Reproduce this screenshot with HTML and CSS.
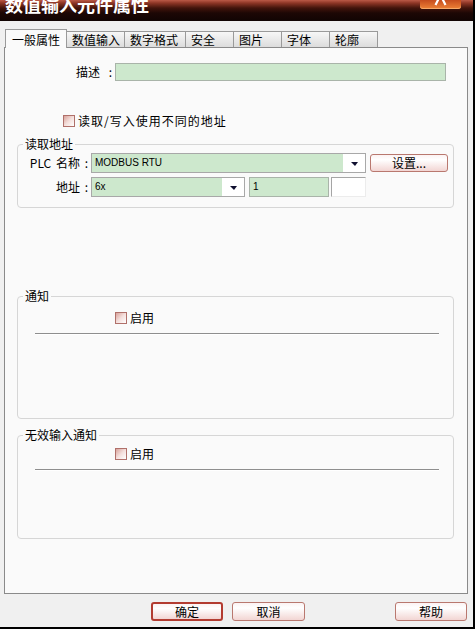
FILE: index.html
```html
<!DOCTYPE html>
<html lang="zh-CN">
<head>
<meta charset="utf-8">
<title>数值输入元件属性</title>
<link rel="stylesheet" href="styles.css">
</head>
<body>
<div class="window">
  <div class="titlebar">
    <span class="title">数值输入元件属性</span>
    <span class="close">
      <svg width="41" height="9" viewBox="0 0 41 9"><path d="M19 -2 L15.5 5 M22 -2 L25.5 5" stroke="#fff" stroke-width="2.2" fill="none"/></svg>
    </span>
  </div>

  <div class="tabs">
    <div class="tab active">一般属性</div>
    <div class="tab t58">数值输入</div>
    <div class="tab t61">数字格式</div>
    <div class="tab">安全</div>
    <div class="tab">图片</div>
    <div class="tab">字体</div>
    <div class="tab">轮廓</div>
  </div>

  <div class="panel">
    <div class="row-desc">
      <span class="lbl">描述 :</span>
      <span class="input desc-input"></span>
    </div>

    <div class="check check-addr"><span class="box"></span><span class="spaced">读取/写入使用不同的地址</span></div>

    <fieldset class="group group-read">
      <legend>读取地址</legend>
      <div class="frow">
        <span class="flbl">PLC 名称 :</span>
        <div class="combo combo-plc"><span class="val">MODBUS RTU</span><span class="arrow"></span></div>
        <button class="btn btn-set">设置...</button>
      </div>
      <div class="frow frow2">
        <span class="flbl">地址 :</span>
        <div class="combo combo-addr"><span class="val">6x</span><span class="arrow"></span></div>
        <span class="input num-input">1</span>
        <span class="sunken"></span>
      </div>
    </fieldset>

    <fieldset class="group group-notify">
      <legend>通知</legend>
      <div class="group-body body-notify">
        <div class="check check-enable check-notify"><span class="box"></span><span>启用</span></div>
        <div class="sep sep-notify"></div>
      </div>
    </fieldset>

    <fieldset class="group group-invalid">
      <legend>无效输入通知</legend>
      <div class="group-body body-invalid">
        <div class="check check-enable check-invalid"><span class="box"></span><span>启用</span></div>
        <div class="sep sep-invalid"></div>
      </div>
    </fieldset>
  </div>

  <div class="buttons">
    <button class="btn btn-dlg btn-default">确定</button>
    <button class="btn btn-dlg btn-cancel">取消</button>
    <button class="btn btn-dlg btn-help">帮助</button>
  </div>
</div>
</body>
</html>
```

FILE: styles.css
```css
* { box-sizing: border-box; }
html, body { margin: 0; padding: 0; }
body {
  width: 475px;
  height: 629px;
  overflow: hidden;
  background: #f0f0f0;
  font-family: "Noto Sans CJK SC", "Noto Sans", sans-serif;
  font-size: 12px;
  line-height: 14px;
  color: #000;
}

.window {
  width: 475px;
  height: 629px;
  background: #f0f0f0;
  border-right: 2px solid #000;
  border-bottom: 2px solid #000;
  display: flex;
  flex-direction: column;
  overflow: hidden;
}

/* title bar */
.titlebar {
  flex: none;
  height: 21px;
  display: flex;
  align-items: flex-start;
  overflow: hidden;
  background: linear-gradient(to bottom, #bb5a47 0px, #8e3626 3px, #42140b 8px, #1d0705 13px, #110403 21px);
}
.title {
  margin: -5px 0 0 5px;
  font-size: 18px;
  line-height: 18px;
  font-weight: bold;
  color: #fff;
}
.close {
  margin-left: auto;
  margin-right: 12px;
  width: 41px;
  height: 9px;
  display: flex;
  background: linear-gradient(to bottom, #c54c1e, #ee8236);
  border-radius: 0 0 3px 3px;
  box-shadow: inset 0 -1px 0 #f6a868;
}

/* tabs */
.tabs {
  flex: none;
  height: 26px;
  margin-left: 5px;
  display: flex;
  align-items: flex-end;
  position: relative;
  z-index: 1;
}
.tab {
  width: 48px;
  height: 16px;
  padding-left: 5px;
  border: 1px solid #9a9a9a;
  border-bottom: none;
  border-left: none;
  background: linear-gradient(to bottom, #f7f7f7, #dcdcdc);
  line-height: 15px;
  white-space: nowrap;
}
.tab.t58 { width: 58px; }
.tab.t61 { width: 61px; }
.tab.active {
  width: 62px;
  height: 19px;
  margin-bottom: -1px;
  padding: 2px 0 0 6px;
  border-left: 1px solid #9a9a9a;
  background: #fafafa;
}

/* panel */
.panel {
  flex: none;
  margin-left: 4px;
  width: 464px;
  height: 547px;
  border: 1px solid #8a8a8a;
  background: #fafafa;
}

.row-desc {
  margin-top: 15px;
  height: 18px;
  display: flex;
  align-items: center;
}
.lbl {
  width: 107px;
  text-align: right;
  word-spacing: 6px;
}
.input {
  height: 18px;
  border: 1px solid #a9b4a9;
  background: #cde8cd;
}
.desc-input {
  margin-left: 3px;
  width: 331px;
}

.check {
  height: 12px;
  display: flex;
  align-items: center;
  line-height: 12px;
}
.box {
  width: 12px;
  height: 12px;
  margin-right: 3px;
  border: 1px solid #b0706a;
  background: linear-gradient(135deg, #d9a39b 0%, #f4dfdc 50%, #fff 100%);
}
.check-addr {
  margin: 34px 0 0 58px;
}
.spaced { letter-spacing: 1px; }

/* group boxes */
.group {
  margin: 0 13px 0 12px;
  padding: 0;
  min-width: 0;
  border: 1px solid #d6d6d6;
  border-radius: 4px;
}
.group legend {
  margin-left: 5px;
  padding: 0 2px;
  font-size: 12px;
  line-height: 14px;
}
.group-read {
  margin-top: 10px;
  padding: 2px 0 10px 0;
}
.frow {
  height: 20px;
  display: flex;
  align-items: center;
}
.frow2 { margin-top: 4px; }
.flbl {
  width: 70px;
  margin-right: 3px;
  text-align: right;
  word-spacing: 2px;
  white-space: nowrap;
}
.combo {
  height: 20px;
  display: flex;
  border: 1px solid #a8a8a8;
  background: #fff;
}
.combo .val {
  flex: 1;
  background: #cde8cd;
  padding-left: 3px;
  font-family: "Liberation Sans", Arial, sans-serif;
  font-size: 10px;
  line-height: 18px;
}
.combo .arrow {
  width: 22px;
  display: flex;
  align-items: center;
  justify-content: center;
}
.combo .arrow::after {
  content: "";
  width: 0;
  height: 0;
  margin-top: 1px;
  border-left: 4px solid transparent;
  border-right: 3px solid transparent;
  border-top: 4px solid #101030;
}
.combo-plc { width: 275px; }
.combo-addr { width: 154px; }
.num-input {
  width: 80px;
  height: 20px;
  margin-left: 4px;
  padding-left: 3px;
  font-family: "Liberation Sans", Arial, sans-serif;
  font-size: 10px;
  line-height: 18px;
}
.sunken {
  width: 35px;
  height: 20px;
  margin-left: 2px;
  border-top: 1px solid #a5a5a5;
  border-left: 1px solid #a5a5a5;
  border-right: 1px solid #ececec;
  border-bottom: 1px solid #ececec;
  background: #fff;
}

.btn {
  font-family: inherit;
  font-size: 12px;
  color: #000;
  padding: 0;
  border: 1px solid #b9786f;
  border-radius: 3px;
  background: linear-gradient(to bottom, #fbf3f3 0%, #ffffff 30%, #f2d5d3 100%);
  cursor: default;
}
.btn-set {
  margin-left: 4px;
  width: 78px;
  height: 18px;
  line-height: 16px;
}

.group-notify { margin-top: 81px; }
.group-invalid { margin-top: 9px; }
.body-notify { height: 106px; }
.body-invalid { height: 90px; }
.check-enable { margin-left: 97px; }
.check-notify { margin-top: 9px; }
.check-invalid { margin-top: 6px; }
.sep {
  margin-left: 17px;
  width: 404px;
  height: 2px;
  border-top: 1px solid #8e8e8e;
  border-bottom: 1px solid #ffffff;
}
.sep-notify { margin-top: 9px; }
.sep-invalid { margin-top: 9px; }

/* dialog buttons */
.buttons {
  flex: none;
  margin-top: 8px;
  padding: 0 6px 0 151px;
  display: flex;
}
.btn-dlg {
  width: 72px;
  height: 19px;
  line-height: 17px;
}
.btn-default {
  border: 2px solid #b33c31;
  line-height: 15px;
}
.btn-cancel { margin-left: 9px; width: 73px; }
.btn-help { margin-left: auto; }
```
